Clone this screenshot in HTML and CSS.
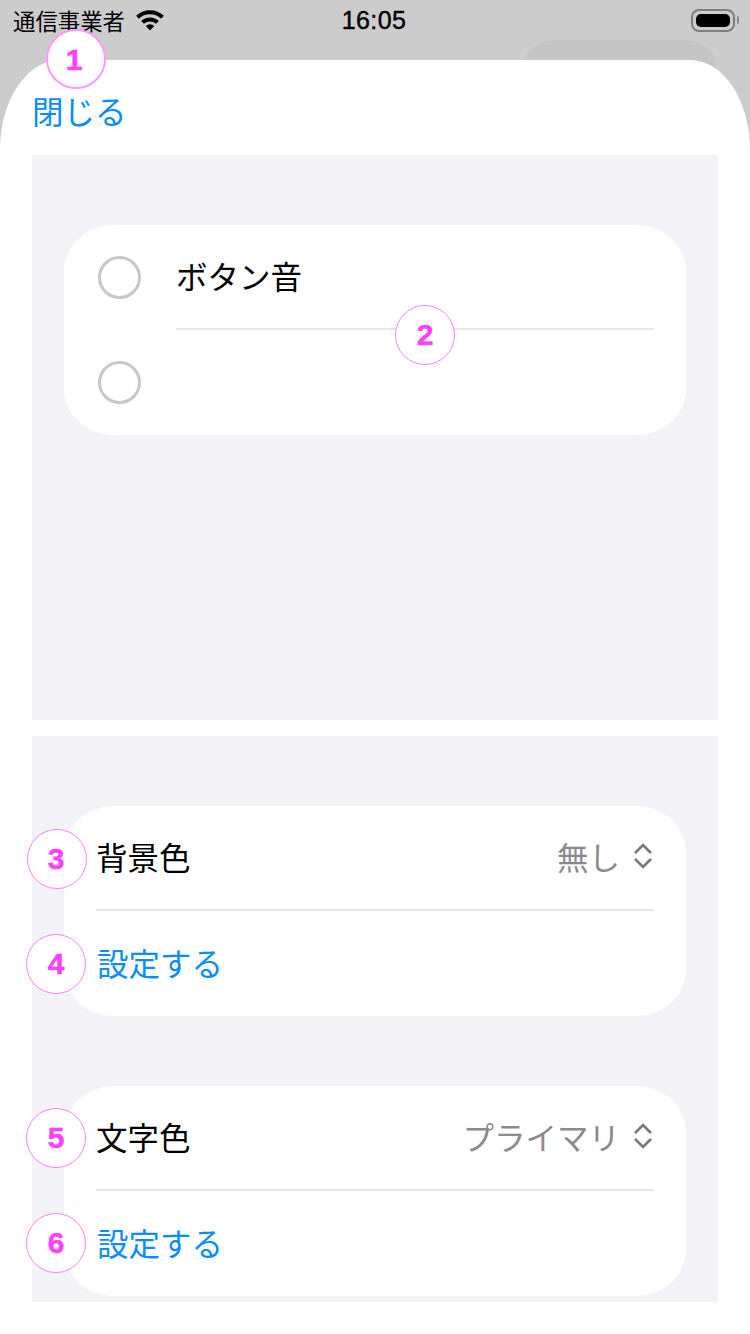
FILE: index.html
```html
<!DOCTYPE html>
<html lang="ja">
<head>
    <meta charset="UTF-8">
    <meta name="viewport" content="width=device-width, initial-scale=1.0">
    <title>設定</title>
    <link rel="stylesheet" href="styles.css">
</head>
<body>

<div class="screen">
    <div class="status-bar">
        <div class="status-left">
            <span class="carrier">通信事業者</span>
            <svg class="wifi" width="30" height="22" viewBox="0 0 30 22">
                <path class="wifi-arc" d="M2.5 8.2A18 18 0 0 1 27.5 8.2"/>
                <path class="wifi-arc" d="M7.6 13.4A10.6 10.6 0 0 1 22.4 13.4"/>
                <path d="M10.8 17A6.2 6.2 0 0 1 19.2 17L15 21.6z"/>
            </svg>
        </div>
        <span class="clock">16:05</span>
        <div class="status-right">
            <div class="battery"><div class="battery-level"></div></div>
        </div>
    </div>

    <div class="back-card"></div>

    <div class="sheet">
        <div class="sheet-header">
            <span class="link close-link">閉じる</span>
        </div>

        <div class="section">
            <div class="card">
                <div class="check-row">
                    <div class="radio"></div>
                    <div class="check-body check-body-line">
                        <span class="label">ボタン音</span>
                    </div>
                </div>
                <div class="check-row">
                    <div class="radio"></div>
                    <div class="check-body"></div>
                </div>
            </div>
        </div>

        <div class="section section-colors">
            <div class="card">
                <div class="row row-line">
                    <span class="label">背景色</span>
                    <span class="picker">無し
                        <svg class="chevrons" width="20" height="28" viewBox="0 0 20 28">
                            <path d="M2 11l8-8 8 8M2 17l8 8 8-8"/>
                        </svg>
                    </span>
                </div>
                <div class="row">
                    <span class="link row-link">設定する</span>
                </div>
            </div>
            <div class="card">
                <div class="row row-line">
                    <span class="label">文字色</span>
                    <span class="picker">プライマリ
                        <svg class="chevrons" width="20" height="28" viewBox="0 0 20 28">
                            <path d="M2 11l8-8 8 8M2 17l8 8 8-8"/>
                        </svg>
                    </span>
                </div>
                <div class="row">
                    <span class="link row-link">設定する</span>
                </div>
            </div>
        </div>
    </div>

    <!-- 注釈の番号 -->
    <div class="marker marker-1">1</div>
    <div class="marker marker-2">2</div>
    <div class="marker marker-3">3</div>
    <div class="marker marker-4">4</div>
    <div class="marker marker-5">5</div>
    <div class="marker marker-6">6</div>
</div>

</body>
</html>
```

FILE: styles.css
```css
* {
    box-sizing: border-box;
}
html, body {
    margin: 0;
    padding: 0;
}
body {
    font-family: "Noto Sans CJK JP", "Liberation Sans", sans-serif;
    background-color: #cccccc;
}
.screen {
    position: relative;
    width: 750px;
    height: 1334px;
    overflow: hidden;
    background-color: #cccccc;
}
.status-bar {
    display: flex;
    align-items: center;
    height: 40px;
    padding: 0 15px 0 13px;
    color: #000;
}
.status-left, .status-right {
    display: flex;
    flex: 1;
    align-items: center;
}
.status-left {
    gap: 10px;
}
.status-right {
    justify-content: flex-end;
}
.carrier {
    font-size: 22.4px;
    line-height: 40px;
}
.wifi {
    fill: #000;
}
.wifi-arc {
    fill: none;
    stroke: #000;
    stroke-width: 4;
}
.clock {
    font-family: "Liberation Sans", sans-serif;
    font-size: 25px;
    font-weight: 500;
    letter-spacing: 0.4px;
    -webkit-text-stroke: 0.4px #000;
}
.battery {
    position: relative;
    width: 44px;
    height: 23px;
    padding: 3px;
    border: 2px solid #7f7f7f;
    border-radius: 8px;
}
.battery::after {
    content: "";
    position: absolute;
    right: -6px;
    top: 5px;
    width: 2px;
    height: 8px;
    background-color: #8a8a8a;
    border-radius: 0 2px 2px 0;
}
.battery-level {
    width: 100%;
    height: 100%;
    background-color: #000;
    border-radius: 5px;
}
.back-card {
    position: absolute;
    left: 525px;
    top: 40px;
    width: 190px;
    height: 60px;
    background-color: #c5c5c5;
    border-radius: 30px 30px 0 0 / 24px 24px 0 0;
}
.sheet {
    position: relative;
    height: 1274px;
    margin-top: 20px;
    padding: 0 32px;
    background-color: #fff;
    border-radius: 60px 60px 0 0 / 90px 90px 0 0;
}
.sheet-header {
    height: 95px;
    padding-top: 29px;
}
.link {
    color: #0a8cff;
}
.link, .label, .picker {
    font-size: 31.5px;
    line-height: 42px;
}
.section {
    height: 565px;
    padding: 70px 32px 0;
    background-color: #f2f2f7;
}
.section-colors {
    height: 566px;
    margin-top: 16px;
}
.card {
    height: 210px;
    background-color: #fff;
    border-radius: 50px / 46px;
}
.card + .card {
    margin-top: 70px;
}
.check-row {
    display: flex;
    height: 105px;
}
.radio {
    width: 43px;
    height: 43px;
    margin: 31px 0 0 34px;
    border: 3px solid #c7c7c7;
    border-radius: 50%;
}
.check-body {
    flex: 1;
    margin: 0 32px 0 35px;
    padding-top: 29px;
    height: 105px;
}
.check-body-line {
    border-bottom: 2px solid #e5e5e7;
}
.row {
    display: flex;
    align-items: center;
    justify-content: space-between;
    height: 105px;
    margin: 0 32px;
    padding-bottom: 4px;
}
.row-line {
    border-bottom: 2px solid #e5e5e7;
}
.row-link {
    margin-left: 1px;
}
.label {
    color: #000;
}
.picker {
    display: flex;
    align-items: center;
    gap: 13px;
    color: #8a8a8e;
}
.chevrons {
    margin-right: 1px;
    fill: none;
    stroke: #77777b;
    stroke-width: 2.6;
}
.marker {
    position: absolute;
    width: 60px;
    height: 60px;
    font-family: "Liberation Sans", sans-serif;
    font-size: 30px;
    font-weight: bold;
    line-height: 58px;
    text-align: center;
    color: #ff40ff;
    background-color: #fff;
    border: 1.5px solid #ff80ff;
    border-radius: 50%;
    -webkit-text-stroke: 0.5px #ff40ff;
}
.marker-1 { left: 46px; top: 29px; padding-right: 4px; border: 2px solid #ff99ff; }
.marker-2 { left: 395px; top: 305px; }
.marker-3 { left: 27px; top: 829px; padding-right: 2px; }
.marker-4 { left: 26px; top: 934px; }
.marker-5 { left: 26px; top: 1108px; }
.marker-6 { left: 26px; top: 1213px; }
```
